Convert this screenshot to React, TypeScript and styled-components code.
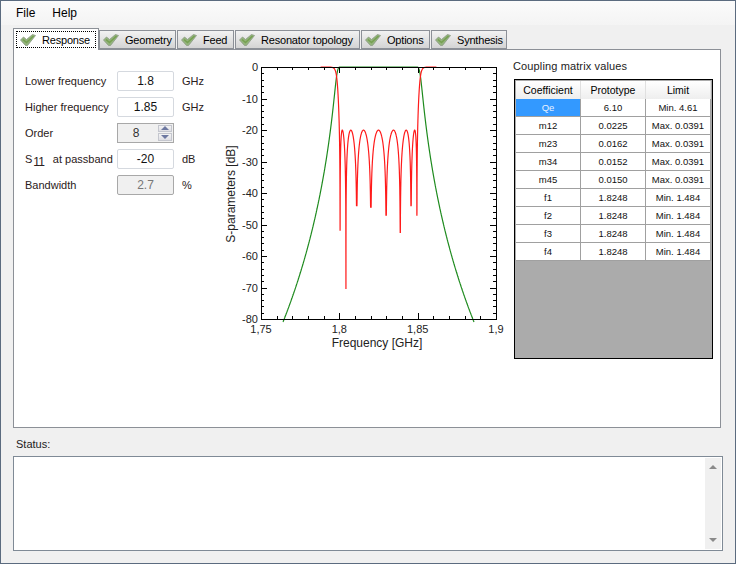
import React from 'react';
import styled, {createGlobalStyle} from 'styled-components';

const GlobalStyle = createGlobalStyle`
  html, body {
    margin: 0;
    padding: 0;
    background: #f0f0f0;
  }
  body {
    font-family: "Liberation Sans", Arial, sans-serif;
    font-size: 11px;
    color: #111;
  }
`

const tabs = [
    {name: 'Response', width: 86},
    {name: 'Geometry', width: 77},
    {name: 'Feed', width: 57},
    {name: 'Resonator topology', width: 125},
    {name: 'Options', width: 69},
    {name: 'Synthesis', width: 76},
]

type RowType = { name: string, prototype: string, limit: string }

const rows: RowType[] = [
    {name: 'Qe', prototype: '6.10', limit: 'Min. 4.61'},
    {name: 'm12', prototype: '0.0225', limit: 'Max. 0.0391'},
    {name: 'm23', prototype: '0.0162', limit: 'Max. 0.0391'},
    {name: 'm34', prototype: '0.0152', limit: 'Max. 0.0391'},
    {name: 'm45', prototype: '0.0150', limit: 'Max. 0.0391'},
    {name: 'f1', prototype: '1.8248', limit: 'Min. 1.484'},
    {name: 'f2', prototype: '1.8248', limit: 'Min. 1.484'},
    {name: 'f3', prototype: '1.8248', limit: 'Min. 1.484'},
    {name: 'f4', prototype: '1.8248', limit: 'Min. 1.484'},
]

const CheckIcon = () => (
    <svg width="16" height="12" viewBox="0 0 16 12">
        <path d="M0.5 6 L3.5 3 L6.5 5.5 L12.5 0.5 L15.5 1.5 L7.5 11.5 L5.5 11.5 Z" fill="#94b47c" stroke="#8b9a84" strokeWidth="0.8"/>
        <path d="M3 5.5 L6.5 8.5 L13.5 2" fill="none" stroke="#76a052" strokeWidth="1.6"/>
    </svg>
)

// plot area in svg coordinates
const PLOT = {left: 36, right: 271, top: 7, bottom: 259}
const xPos = (f: number) => PLOT.left + (f - 1.75) / 0.15 * (PLOT.right - PLOT.left)
const yPos = (db: number) => PLOT.top - db / 80 * (PLOT.bottom - PLOT.top)

const cheb = (x: number) => {
    const a = Math.abs(x)
    return a <= 1 ? Math.cos(8 * Math.acos(a)) : Math.cosh(8 * Math.acosh(a))
}

const EPS2 = 0.01
const notches = [
    {f: 1.80048, depth: -52}, {f: 1.80422, depth: -70.5}, {f: 1.81114, depth: -44}, {f: 1.82012, depth: -44.5},
    {f: 1.82988, depth: -47}, {f: 1.83886, depth: -52.5}, {f: 1.84578, depth: -44}, {f: 1.84952, depth: -47},
]

const buildCurves = () => {
    let s21 = ''
    let s11 = ''
    const freqs: number[] = notches.map(n => n.f)
    for (let i = 0; i <= 3000; i++) freqs.push(1.75 + 0.15 * i / 3000)
    freqs.sort((a, b) => a - b)
    freqs.forEach(f => {
        const t = cheb((f - 1.825) / 0.025)
        const d = EPS2 * t * t
        const il = -10 * Math.log10(1 + d)
        const notch = notches.find(n => n.f === f)
        const near = notches.reduce((a, b) => Math.abs(b.f - f) < Math.abs(a.f - f) ? b : a)
        const rl = notch ? notch.depth : Math.max(-10 * Math.log10(1 + 1 / Math.max(d, 1e-12)), near.depth)
        if (il > -81) s21 += `${s21 ? 'L' : 'M'}${xPos(f).toFixed(2)} ${yPos(il).toFixed(2)}`
        if (f > 1.788 && f < 1.862) s11 += `${s11 ? 'L' : 'M'}${xPos(f).toFixed(2)} ${yPos(rl).toFixed(2)}`
    })
    return {s21, s11}
}

const Chart = () => {
    const {s21, s11} = buildCurves()
    const ticks = []
    for (let i = 0; i <= 15; i++) {
        const x = Math.round(xPos(1.75 + i * 0.01)) + 0.5
        const len = i % 5 === 0 ? 6 : 3
        ticks.push(`M${x} ${PLOT.top}v${len}M${x} ${PLOT.bottom}v${-len}`)
    }
    for (let i = 0; i <= 40; i++) {
        const y = Math.round(yPos(-i * 2)) + 0.5
        const len = i % 5 === 0 ? 6 : 3
        ticks.push(`M${PLOT.left} ${y}h${len}M${PLOT.right} ${y}h${-len}`)
    }
    return (
        <svg width="285" height="300" viewBox="0 0 285 300">
            <rect x={PLOT.left} y={PLOT.top} width={PLOT.right - PLOT.left} height={PLOT.bottom - PLOT.top} fill="#fff"/>
            <path d={s21} fill="none" stroke="#1d8a1d" strokeWidth="1.2"/>
            <path d={s11} fill="none" stroke="#ff1a1a" strokeWidth="1.2"/>
            <rect x={PLOT.left + 0.5} y={PLOT.top + 0.5} width={PLOT.right - PLOT.left} height={PLOT.bottom - PLOT.top} fill="none" stroke="#000"/>
            <path d={ticks.join('')} fill="none" stroke="#000" strokeWidth="1"/>
            {[0, 10, 20, 30, 40, 50, 60, 70, 80].map(v => (
                <AxisText key={v} x={PLOT.left - 3} y={yPos(-v) + 4} textAnchor="end">{v === 0 ? '0' : `-${v}`}</AxisText>
            ))}
            {['1,75', '1,8', '1,85', '1,9'].map((v, i) => (
                <AxisText key={v} x={xPos(1.75 + i * 0.05)} y={PLOT.bottom + 14} textAnchor="middle">{v}</AxisText>
            ))}
            <AxisTitle x={152} y={287} textAnchor="middle">Frequency [GHz]</AxisTitle>
            <AxisTitle x={0} y={0} textAnchor="middle" transform="translate(10 134) rotate(-90)">S-parameters [dB]</AxisTitle>
        </svg>
    )
}

const App = () => {
    return (
        <>
            <GlobalStyle/>
            <Window>
                <MenuBar>
                    <MenuItem>File</MenuItem>
                    <MenuItem>Help</MenuItem>
                </MenuBar>
                <TabStrip>
                    {tabs.map((t, i) => (
                        <Tab key={t.name} active={i === 0} width={t.width}>
                            <TabInner active={i === 0}>
                                <CheckIcon/>
                                <span>{t.name}</span>
                            </TabInner>
                        </Tab>
                    ))}
                </TabStrip>
                <Panel>
                    <Form>
                        <FormRow>
                            <Label>Lower frequency</Label>
                            <Input>1.8</Input>
                            <Unit>GHz</Unit>
                        </FormRow>
                        <FormRow>
                            <Label>Higher frequency</Label>
                            <Input>1.85</Input>
                            <Unit>GHz</Unit>
                        </FormRow>
                        <FormRow>
                            <Label>Order</Label>
                            <SpinBox>
                                <SpinValue>8</SpinValue>
                                <SpinButtons>
                                    <SpinButton><SpinArrow up/></SpinButton>
                                    <SpinButton><SpinArrow/></SpinButton>
                                </SpinButtons>
                            </SpinBox>
                        </FormRow>
                        <FormRow>
                            <Label>S<Sub>11</Sub>at passband</Label>
                            <Input>-20</Input>
                            <Unit>dB</Unit>
                        </FormRow>
                        <FormRow>
                            <Label>Bandwidth</Label>
                            <Input disabled>2.7</Input>
                            <Unit>%</Unit>
                        </FormRow>
                    </Form>
                    <ChartBox>
                        <Chart/>
                    </ChartBox>
                    <Coupling>
                        <CouplingTitle>Coupling matrix values</CouplingTitle>
                        <Grid>
                            <Head>Coefficient</Head>
                            <Head>Prototype</Head>
                            <Head>Limit</Head>
                            {rows.map((r, i) => (
                                <React.Fragment key={r.name}>
                                    <Cell selected={i === 0}>{r.name}</Cell>
                                    <Cell>{r.prototype}</Cell>
                                    <Cell>{r.limit}</Cell>
                                </React.Fragment>
                            ))}
                        </Grid>
                    </Coupling>
                </Panel>
                <StatusLabel>Status:</StatusLabel>
                <StatusBox>
                    <ScrollBar>
                        <ScrollArrow up/>
                        <ScrollArrow/>
                    </ScrollBar>
                </StatusBox>
            </Window>
        </>
    )
}

export default App

const Window = styled.div`
  box-sizing: border-box;
  width: 736px;
  height: 564px;
  display: flex;
  flex-direction: column;
  background: #f0f0f0;
  border: 1px solid #5b6b7f;
  overflow: hidden;
`

const MenuBar = styled.div`
  height: 24px;
  display: flex;
  align-items: center;
  padding-left: 9px;
  background: linear-gradient(#fbfbfb, #f4f4f4);
`

const MenuItem = styled.div`
  padding: 0 6px;
  margin-right: 5px;
  font-size: 12px;
  color: #000;
`

const TabStrip = styled.div`
  height: 24px;
  display: flex;
  align-items: flex-end;
  gap: 1px;
  padding-left: 12px;
  position: relative;
  z-index: 1;
`

type TabType = { active?: boolean, width?: number }

const Tab = styled.div<TabType>`
  box-sizing: border-box;
  width: ${({width}) => width}px;
  height: ${({active}) => active ? '22px' : '19px'};
  display: flex;
  align-items: center;
  padding-left: ${({active}) => active ? '2px' : '3px'};
  margin-right: ${({active}) => active ? '-1px' : '0'};
  margin-bottom: ${({active}) => active ? '-1px' : '0'};
  background: ${({active}) => active ? '#fff' : 'linear-gradient(#f2f2f2, #d4d4d4)'};
  border: 1px solid #8c9097;
  border-bottom: ${({active}) => active ? 'none' : '1px solid #8c9097'};
  color: #000;
  white-space: nowrap;
  letter-spacing: -0.2px;
`

const TabInner = styled.div<TabType>`
  box-sizing: border-box;
  flex: ${({active}) => active ? '0 0 80px' : '0 0 auto'};
  height: 17px;
  display: flex;
  align-items: center;
  gap: 6px;
  padding-left: ${({active}) => active ? '3px' : '0'};
  border: ${({active}) => active ? '1px dotted #000' : 'none'};
`

const Panel = styled.div`
  box-sizing: border-box;
  width: 708px;
  height: 379px;
  margin-left: 12px;
  display: flex;
  background: #fff;
  border: 1px solid #8c9097;
`

const Form = styled.div`
  width: 197px;
  padding: 20px 0 0 11px;
  box-sizing: border-box;
  display: flex;
  flex-direction: column;
  gap: 5px;
`

const FormRow = styled.div`
  height: 21px;
  display: flex;
  align-items: center;
`

const Label = styled.div`
  width: 92px;
  color: #2a2020;
  white-space: nowrap;
`

const Sub = styled.span`
  font-size: 12px;
  letter-spacing: -1px;
  position: relative;
  top: 3px;
  margin: 0 9px 0 1px;
`

const Input = styled.div<{disabled?: boolean}>`
  box-sizing: border-box;
  width: 57px;
  height: 20px;
  line-height: 18px;
  font-size: 12px;
  text-align: center;
  background: ${({disabled}) => disabled ? '#f0f0f0' : '#fff'};
  color: ${({disabled}) => disabled ? '#777' : '#111'};
  border: 1px solid ${({disabled}) => disabled ? '#a8a8a8' : '#d5d9df'};
  border-radius: 2px;
`

const Unit = styled.div`
  margin-left: 8px;
  color: #2a2020;
`

const SpinBox = styled.div`
  box-sizing: border-box;
  width: 57px;
  height: 20px;
  display: flex;
  padding: 1px 1px 1px 0;
  font-size: 12px;
  background: #f0f0f0;
  border: 1px solid #a8a8a8;
`

const SpinValue = styled.div`
  flex: 1;
  text-align: center;
  line-height: 16px;
  color: #333;
  padding-right: 4px;
`

const SpinButtons = styled.div`
  width: 14px;
  display: flex;
  flex-direction: column;
  gap: 1px;
`

const SpinButton = styled.div`
  flex: 1;
  display: flex;
  align-items: center;
  justify-content: center;
  background: linear-gradient(#f4f4f4, #dedee4);
  border: 1px solid #c4c6ce;
`

const SpinArrow = styled.div<{up?: boolean}>`
  width: 0;
  height: 0;
  border-left: 4px solid transparent;
  border-right: 4px solid transparent;
  border-${({up}) => up ? 'bottom' : 'top'}: 4px solid #6d78a0;
`

const ChartBox = styled.div`
  width: 285px;
  margin-top: 10px;
  margin-left: 14px;
`

const AxisText = styled.text`
  font-family: "Liberation Sans", Arial, sans-serif;
  font-size: 11px;
  fill: #222;
`

const AxisTitle = styled.text`
  font-family: "Liberation Sans", Arial, sans-serif;
  font-size: 12px;
  fill: #222;
`

const Coupling = styled.div`
  padding: 9px 0 0 3px;
`

const CouplingTitle = styled.div`
  height: 14px;
  line-height: 14px;
  color: #222;
  letter-spacing: 0.13px;
  margin-bottom: 6px;
`

const Grid = styled.div`
  box-sizing: border-box;
  width: 199px;
  height: 280px;
  margin-left: 1px;
  padding: 1px 2px 0 1px;
  display: grid;
  grid-template-columns: 65px 65px 65px;
  grid-auto-rows: 18px;
  align-content: start;
  background: #ababab;
  border: 1px solid #000;
`

const Head = styled.div`
  box-sizing: border-box;
  height: 19px;
  display: flex;
  align-items: center;
  justify-content: center;
  font-size: 10.5px;
  color: #000;
  background: linear-gradient(#fff, #eeeeee);
  border-right: 1px solid #e0e0e0;
  border-bottom: 1px solid #a0a0a0;
`

const Cell = styled.div<{selected?: boolean}>`
  box-sizing: border-box;
  display: flex;
  align-items: center;
  justify-content: center;
  font-size: 9.5px;
  background: ${({selected}) => selected ? '#3399ff' : '#fff'};
  color: ${({selected}) => selected ? '#e8f2ff' : '#111'};
  border-right: 1px solid #a0a0a0;
  border-bottom: 1px solid #a0a0a0;
`

const StatusLabel = styled.div`
  height: 14px;
  line-height: 14px;
  margin: 9px 0 5px 15px;
  color: #222;
`

const StatusBox = styled.div`
  box-sizing: border-box;
  width: 710px;
  height: 95px;
  margin-left: 12px;
  display: flex;
  justify-content: flex-end;
  padding: 1px;
  background: #fff;
  border: 1px solid #7f8a96;
`

const ScrollBar = styled.div`
  width: 16px;
  display: flex;
  flex-direction: column;
  justify-content: space-between;
  align-items: center;
  padding: 7px 0;
  box-sizing: border-box;
  background: #f0f0f0;
`

const ScrollArrow = styled.div<{up?: boolean}>`
  width: 0;
  height: 0;
  border-left: 4px solid transparent;
  border-right: 4px solid transparent;
  border-${({up}) => up ? 'bottom' : 'top'}: 4px solid #8a8a8a;
`
